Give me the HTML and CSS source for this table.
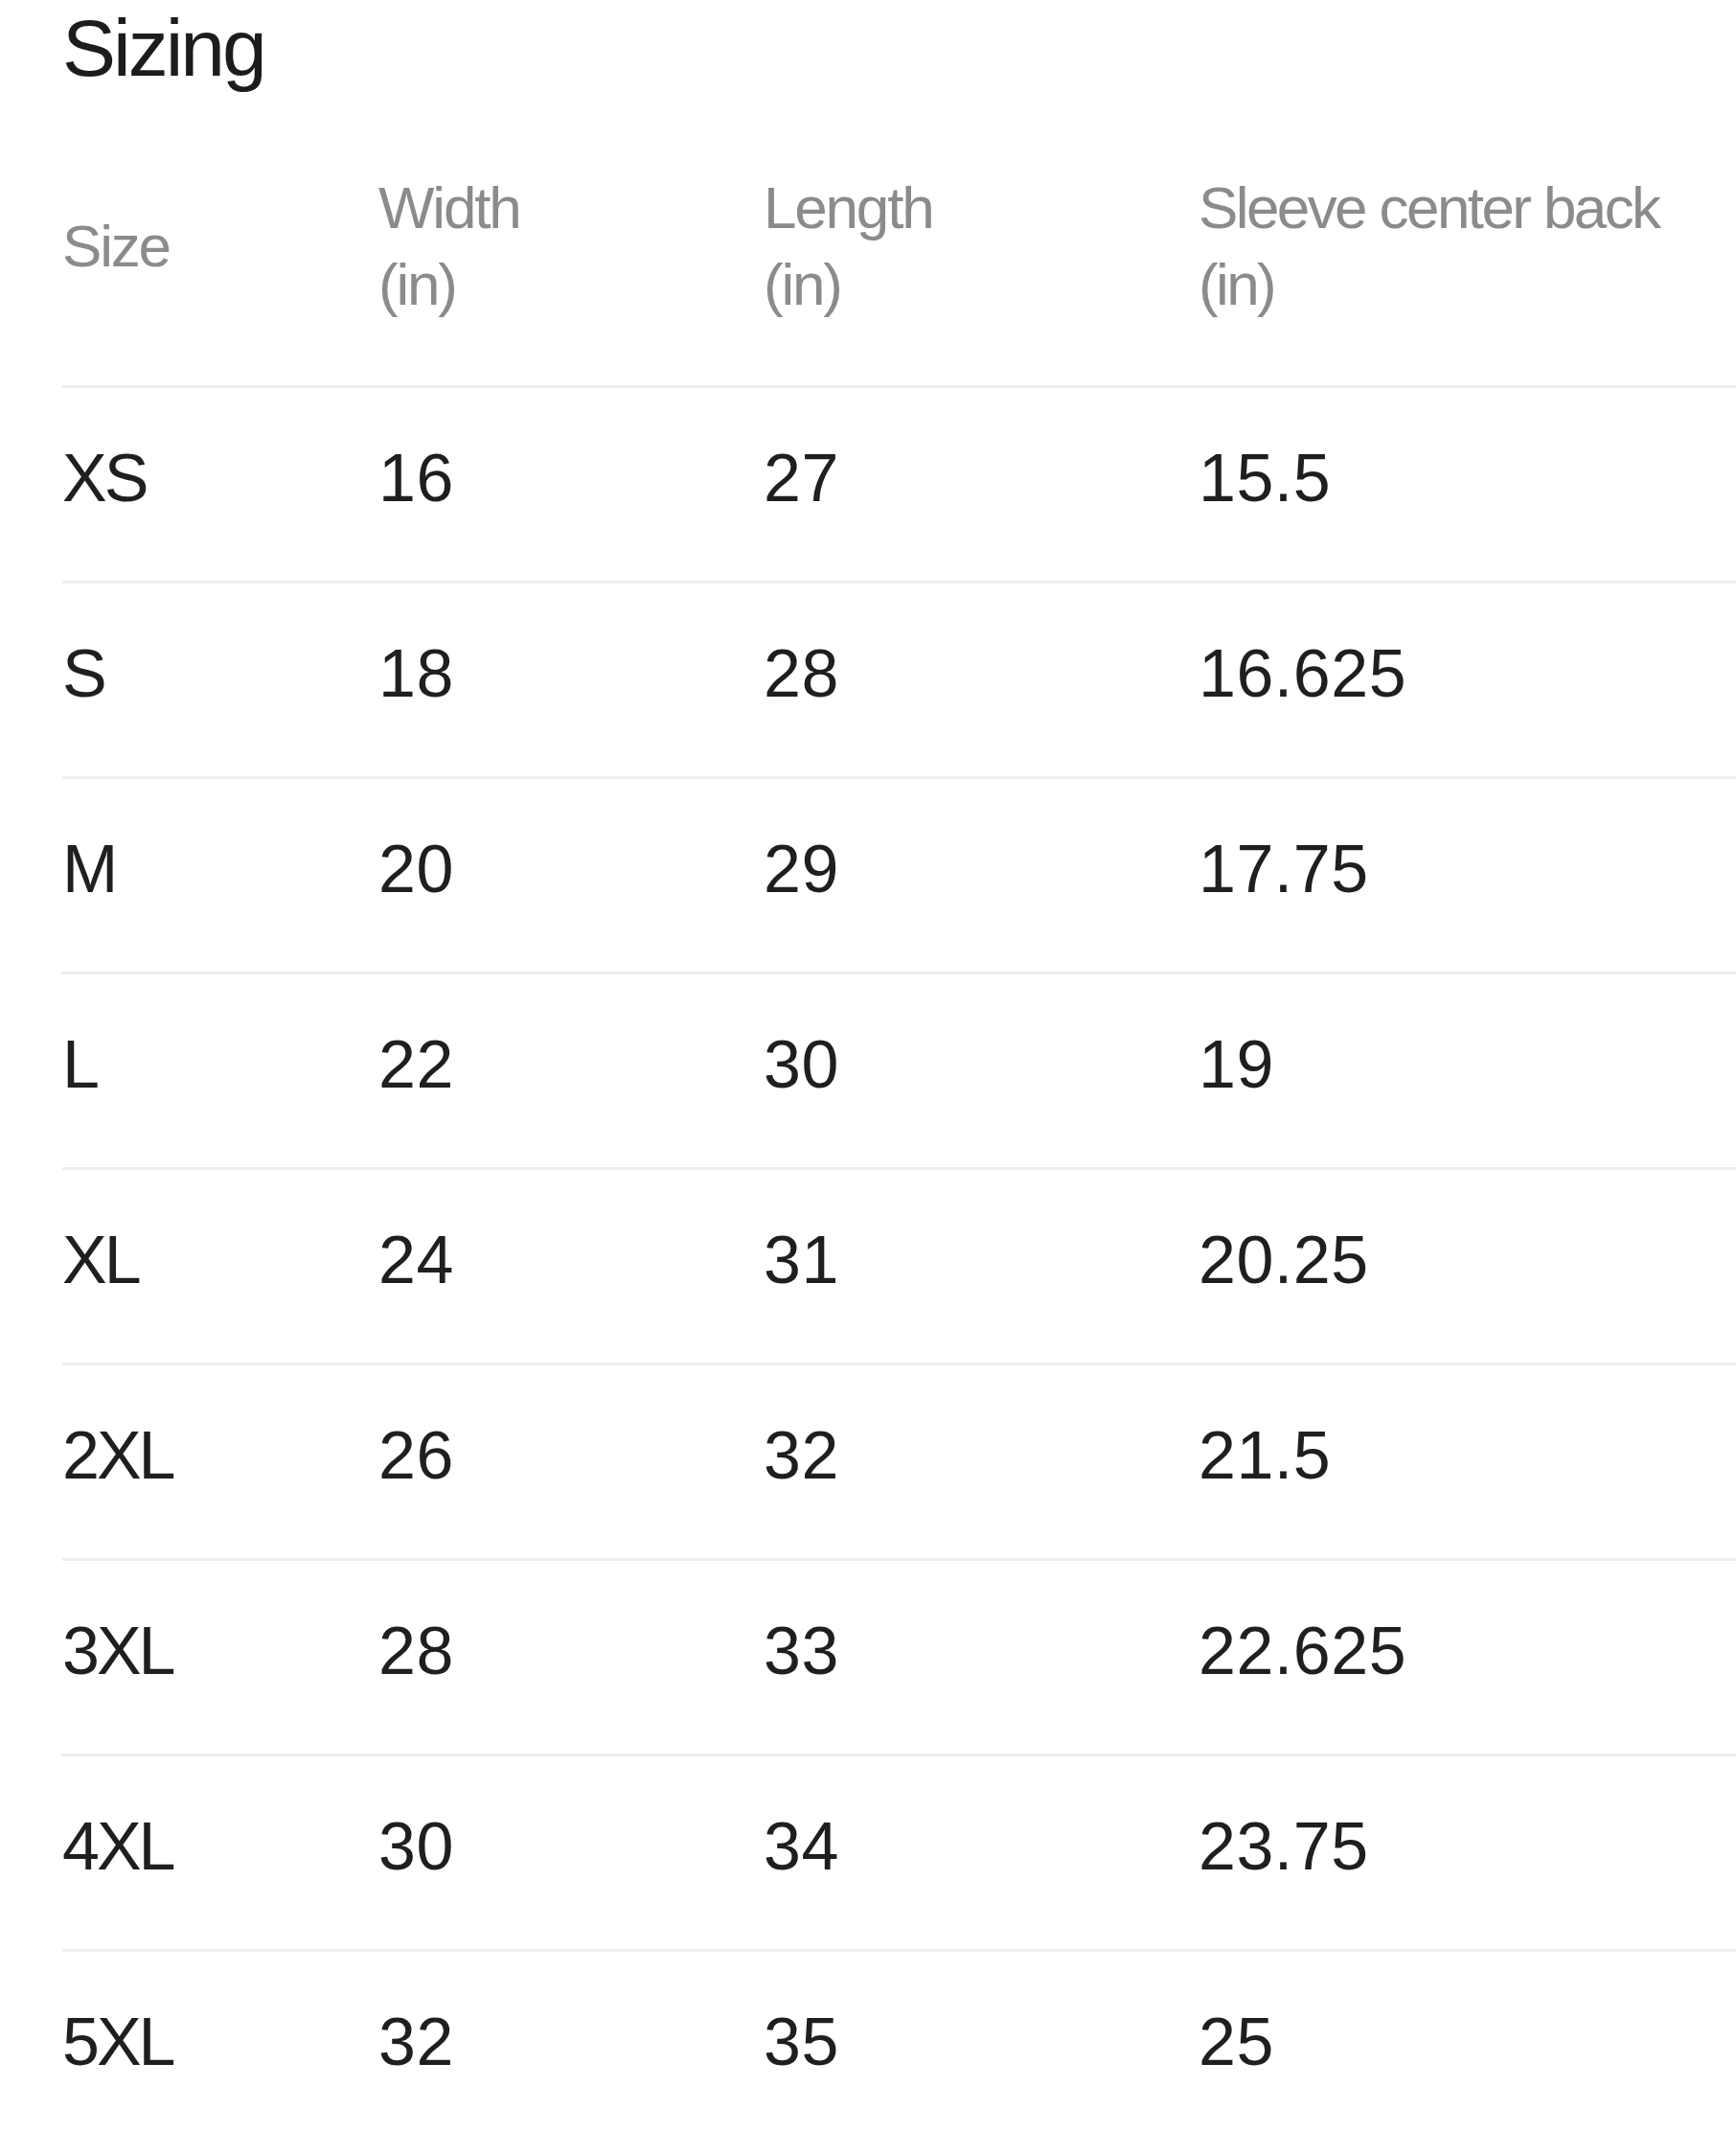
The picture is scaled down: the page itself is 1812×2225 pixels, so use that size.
FILE: index.html
```html
<!DOCTYPE html>
<html lang="en">
<head>
<meta charset="utf-8">
<title>Sizing</title>
<link rel="stylesheet" href="styles.css">
</head>
<body>
<section class="sizing">
  <h2 class="sizing-title">Sizing</h2>
  <table class="size-table">
    <colgroup>
      <col class="col-size">
      <col class="col-width">
      <col class="col-length">
      <col class="col-sleeve">
    </colgroup>
    <thead>
      <tr>
        <th>Size</th>
        <th>Width<br>(in)</th>
        <th>Length<br>(in)</th>
        <th class="th-sleeve">Sleeve center back<br>(in)</th>
      </tr>
    </thead>
    <tbody>
      <tr><td class="size-name">XS</td><td>16</td><td>27</td><td>15.5</td></tr>
      <tr><td class="size-name">S</td><td>18</td><td>28</td><td>16.625</td></tr>
      <tr><td class="size-name">M</td><td>20</td><td>29</td><td>17.75</td></tr>
      <tr><td class="size-name">L</td><td>22</td><td>30</td><td>19</td></tr>
      <tr><td class="size-name">XL</td><td>24</td><td>31</td><td>20.25</td></tr>
      <tr><td class="size-name">2XL</td><td>26</td><td>32</td><td>21.5</td></tr>
      <tr><td class="size-name">3XL</td><td>28</td><td>33</td><td>22.625</td></tr>
      <tr><td class="size-name">4XL</td><td>30</td><td>34</td><td>23.75</td></tr>
      <tr><td class="size-name">5XL</td><td>32</td><td>35</td><td>25</td></tr>
    </tbody>
  </table>
</section>
</body>
</html>
```
FILE: styles.css
```css
html, body {
  margin: 0;
  padding: 0;
  background: #ffffff;
  overflow: hidden;
}

body {
  font-family: "Liberation Sans", Arial, sans-serif;
  color: #232323;
}

.sizing {
  padding-left: 65px;
}

.sizing-title {
  margin: 0;
  font-size: 84px;
  line-height: 100px;
  font-weight: 400;
  letter-spacing: -3px;
  color: #1c1c1c;
}

.size-table {
  margin-top: 12px;
  width: 100%;
  border-collapse: collapse;
  table-layout: fixed;
}

.col-size { width: 330px; }
.col-width { width: 402px; }
.col-length { width: 454px; }

.size-table th {
  padding: 65px 0;
  text-align: left;
  vertical-align: middle;
  font-weight: 400;
  font-size: 62px;
  line-height: 80px;
  letter-spacing: -2.2px;
  color: #8b8b8b;
}

.size-table th.th-sleeve {
  letter-spacing: -2.6px;
}

.size-table td {
  border-top: 3px solid #ededed;
  padding: 54px 0 67px;
  font-size: 70px;
  line-height: 80px;
  letter-spacing: 0.5px;
  color: #1f1f1f;
  vertical-align: top;
}

.size-table td.size-name {
  letter-spacing: -3px;
}

.size-table tbody tr:last-child td {
  padding-bottom: 54px;
}
```
